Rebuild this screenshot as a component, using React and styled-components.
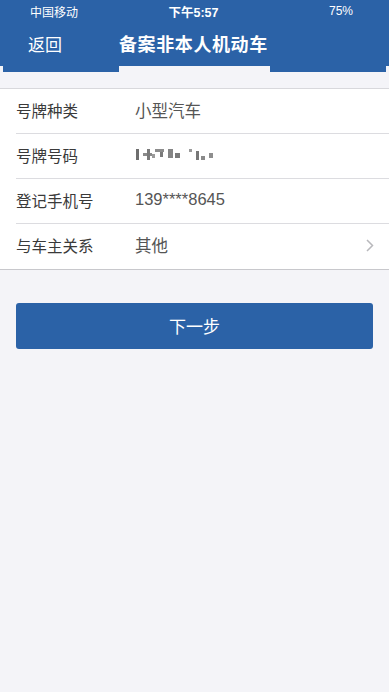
import styled, { createGlobalStyle } from "styled-components";

const Global = createGlobalStyle`
  html, body { margin: 0; padding: 0; background: #f4f4f8; }
  body { font-family: "Liberation Sans", "Noto Sans CJK SC", sans-serif; }
`;

const Page = styled.div`
  width: 389px;
  min-height: 692px;
  background: #f4f4f8;
`;

const Header = styled.div`
  background: #2b62a7;
  color: #ffffff;
  height: 72px;
  position: relative;
`;

const StatusBar = styled.div`
  display: grid;
  grid-template-columns: 1fr auto 1fr;
  align-items: center;
  height: 22px;
  padding: 0 36px 0 30px;
  font-size: 12px;
`;

const Carrier = styled.span`
  justify-self: start;
`;

const Clock = styled.span`
  font-weight: bold;
  font-size: 12.5px;
  margin-left: 4px;
`;

const Battery = styled.span`
  justify-self: end;
`;

const NavBar = styled.div`
  display: flex;
  align-items: center;
  height: 42px;
  padding-left: 28px;
`;

const Back = styled.span`
  font-size: 17px;
  width: 91px;
`;

const Title = styled.span`
  font-size: 18px;
  font-weight: bold;
  letter-spacing: 0.6px;
`;

const Notch = styled.div`
  position: absolute;
  bottom: 0;
  height: 6px;
  background: #f4f4f8;
  left: ${(p) => p.$left}px;
  width: ${(p) => p.$width}px;
`;

const List = styled.div`
  margin-top: 16px;
  background: #ffffff;
  border-top: 1px solid #d8d8dc;
  border-bottom: 1px solid #c8c8cc;
`;

const Row = styled.div`
  display: flex;
  align-items: center;
  height: 45px;
  margin-left: 16px;
  padding-right: 15px;
  padding-bottom: 3px;
  border-bottom: ${(p) => (p.$last ? "none" : "1px solid #dcdce0")};
  box-sizing: border-box;
`;

const Label = styled.span`
  width: 119px;
  font-size: 15.5px;
  color: #3a3a3a;
`;

const Value = styled.span`
  flex: 1;
  display: flex;
  align-items: center;
  font-size: 16.5px;
  color: #555555;
`;

const Chevron = styled.svg`
  width: 8px;
  height: 13px;
`;

const Button = styled.button`
  display: block;
  margin: 33px 16px 0;
  width: 357px;
  height: 46px;
  border: none;
  border-radius: 3px;
  background: #2b62a7;
  color: #ffffff;
  font-family: inherit;
  font-size: 17px;
  padding-bottom: 3px;
`;

function Mosaic() {
  const blocks = [
    [1, 1, 3, 11, "#6e6e6e"],
    [8, 5, 9, 3, "#8a8a8a"],
    [12, 1, 3, 11, "#7a7a7a"],
    [17, 6, 3, 4, "#9a9a9a"],
    [20, 1, 9, 3, "#8c8c8c"],
    [25, 4, 3, 5, "#7a7a7a"],
    [33, 1, 5, 9, "#858585"],
    [40, 5, 5, 5, "#7a7a7a"],
    [54, 1, 3, 3, "#9a9a9a"],
    [61, 3, 3, 9, "#777777"],
    [66, 8, 4, 4, "#8a8a8a"],
    [74, 5, 4, 5, "#8e8e8e"],
  ];
  return (
    <svg width="80" height="13" viewBox="0 0 80 13">
      {blocks.map(([x, y, w, h, c], i) => (
        <rect key={i} x={x} y={y} width={w} height={h} fill={c} />
      ))}
    </svg>
  );
}

export default function App() {
  const rows = [
    { label: "号牌种类", value: "小型汽车" },
    { label: "号牌号码", value: <Mosaic /> },
    { label: "登记手机号", value: "139****8645" },
    { label: "与车主关系", value: "其他", arrow: true },
  ];
  return (
    <Page>
      <Global />
      <Header>
        <StatusBar>
          <Carrier>中国移动</Carrier>
          <Clock>下午5:57</Clock>
          <Battery>75%</Battery>
        </StatusBar>
        <NavBar>
          <Back>返回</Back>
          <Title>备案非本人机动车</Title>
        </NavBar>
        <Notch $left={0} $width={3} />
        <Notch $left={119} $width={151} />
        <Notch $left={386} $width={3} />
      </Header>
      <List>
        {rows.map((r, i) => (
          <Row key={r.label} $last={i === rows.length - 1}>
            <Label>{r.label}</Label>
            <Value>{r.value}</Value>
            {r.arrow && (
              <Chevron viewBox="0 0 8 13">
                <path d="M1 1l5.5 5.5L1 12" fill="none" stroke="#b8b8bc" strokeWidth="1.5" />
              </Chevron>
            )}
          </Row>
        ))}
      </List>
      <Button>下一步</Button>
    </Page>
  );
}
